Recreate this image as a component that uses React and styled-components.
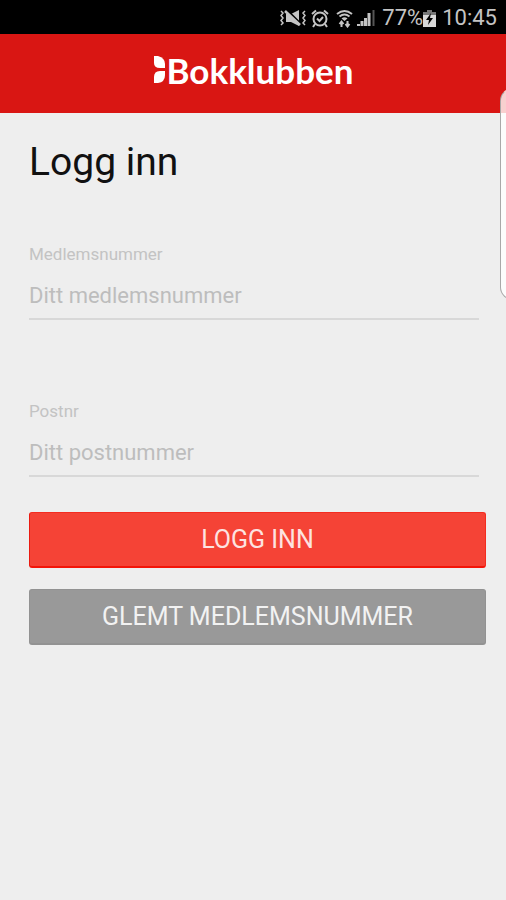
import React, { useState } from 'react'
import styled, { createGlobalStyle } from 'styled-components'

const GlobalStyle = createGlobalStyle`
  *, *::before, *::after {
    box-sizing: border-box;
  }

  body {
    margin: 0;
    background: #eeeeee;
    font-family: Roboto, 'Liberation Sans', sans-serif;
  }
`

const Screen = styled.div`
  position: relative;
  display: flex;
  flex-direction: column;
  min-height: 100vh;
  overflow: hidden;
`

const StatusBar = styled.div`
  display: flex;
  align-items: center;
  justify-content: flex-end;
  height: 34px;
  padding: 2px 9px 0 0;
  background: #000;
  color: #c4c4c4;
  font-size: 22px;
  line-height: 32px;
`

const StatusIcon = styled.svg`
  flex: none;
  fill: none;
  stroke: #c4c4c4;
  stroke-width: 2;
  margin-right: ${props => props.$gap || 0}px;
`

const Clock = styled.span`
  margin-left: 6px;
`

const Header = styled.header`
  display: flex;
  align-items: center;
  justify-content: center;
  height: 79px;
  padding-bottom: 8px;
  background: #d91613;
`

const Logo = styled.div`
  display: flex;
  align-items: center;
  gap: 1px;
  color: #fff;
  font-family: Lato, sans-serif;
  font-size: 35px;
  font-weight: 700;
  line-height: 40px;
`

const LogoMark = styled.svg`
  fill: #fff;
`

const Main = styled.main`
  padding: 25px 20px 24px 29px;
`

const Title = styled.h1`
  margin: 0 0 56px;
  color: #111;
  font-size: 39px;
  font-weight: 400;
  line-height: 48px;
`

const Field = styled.div`
  display: flex;
  flex-direction: column;
  margin: 0 7px ${props => (props.$last ? 35 : 79)}px 0;
`

const Label = styled.label`
  color: #c3c3c3;
  font-size: 17px;
  line-height: 24px;
`

const Input = styled.input`
  width: 100%;
  height: 54px;
  padding: 6px 0 0;
  border: 0;
  border-bottom: 2px solid #d8d8d8;
  border-radius: 0;
  outline: none;
  background: transparent;
  color: #333;
  font: 400 22px/28px Roboto, sans-serif;

  &::placeholder {
    color: #bdbdbd;
    opacity: 1;
  }

  &:focus {
    border-bottom-color: #f54336;
  }
`

const Button = styled.button`
  display: block;
  width: 100%;
  height: 56px;
  margin-bottom: 21px;
  padding: 0;
  border: 1px solid ${props => (props.$primary ? '#f42c20' : '#929292')};
  border-bottom: 2px solid ${props => (props.$primary ? '#f31509' : '#929292')};
  border-left-color: ${props => (props.$primary ? '#ea1a10' : '#929292')};
  border-radius: 3px;
  background: ${props => (props.$primary ? '#f54336' : '#999999')};
  color: ${props => (props.$primary ? '#fde3e1' : '#f2f2f2')};
  font: 400 25px/30px Roboto, sans-serif;
  text-transform: uppercase;
  cursor: pointer;
`

// Handle of the phone's edge panel, it floats over the app
const EdgeHandle = styled.div`
  position: absolute;
  top: 88px;
  right: -20px;
  width: 26px;
  height: 212px;
  border: 1px solid #a8a8a8;
  border-top-color: transparent;
  border-radius: 14px;
  background: rgba(255, 255, 255, 0.8);
`

const VibrateIcon = () => (
  <StatusIcon width="28" height="18" viewBox="0 0 28 18" $gap={4}>
    <path d="M2 2l2 2-2 2.500 2 2.500-2 2.500 2 2.500-2 2M26 2l-2 2 2 2.500-2 2.500 2 2.500-2 2.500 2 2" strokeWidth="1.5" />
    <path d="M7 5h5l8-4v16l-8-4H7z" fill="#c4c4c4" stroke="none" />
    <path d="M8 1l14 14" stroke="#000" strokeWidth="2" />
    <path d="M6 2l15 14" strokeWidth="2.5" />
  </StatusIcon>
)

const AlarmIcon = () => (
  <StatusIcon width="18" height="19" viewBox="0 0 18 19" $gap={7}>
    <circle cx="9" cy="10" r="6.5" />
    <path d="M1 5l4-3.5M17 5l-4-3.5M4 15l-2 3M14 15l2 3M6 9.5l2.5 2.5L12 8" />
  </StatusIcon>
)

const WifiIcon = () => (
  <StatusIcon width="17" height="19" viewBox="0 0 17 19" $gap={4}>
    <path d="M1 5q7.500-6 15 0M3.500 7.500q5-4 10 0" />
    <path d="M5.500 9.500q3-2.500 6 0l-3 2.500z" fill="#c4c4c4" stroke="none" />
    <path d="M5.500 18v-5M3.500 15l2-2.500 2 2.500M11.500 12v5M9.500 15l2 2.500 2-2.500" />
  </StatusIcon>
)

const SignalIcon = () => (
  <StatusIcon width="18" height="18" viewBox="0 0 18 18" $gap={7}>
    <path d="M0 17v-2h3v2zM3.500 17v-5h3v5zM7 17V9h3v8zM10.500 17V4h3v13z" fill="#c4c4c4" stroke="none" />
    <path d="M16.500 1v16" stroke="#555" />
  </StatusIcon>
)

const BatteryIcon = () => (
  <StatusIcon width="13" height="18" viewBox="0 0 13 18">
    <path d="M4 1h5v2h4v15H0V3h4z" fill="#777" stroke="none" />
    <path d="M0 6h13v12H0z" fill="#d8d8d8" stroke="none" />
    <path d="M8 4L3 11h3l-1 5 5-7H7z" fill="#000" stroke="none" />
  </StatusIcon>
)

const App = () => {
  const [member, setMember] = useState('')
  const [postcode, setPostcode] = useState('')

  return (
    <Screen>
      <GlobalStyle />
      <StatusBar>
        <VibrateIcon />
        <AlarmIcon />
        <WifiIcon />
        <SignalIcon />
        <span>77%</span>
        <BatteryIcon />
        <Clock>10:45</Clock>
      </StatusBar>
      <Header>
        <Logo>
          <LogoMark width="13" height="28" viewBox="0 0 13 28">
            <path d="M1 0h4q7 2 7 8v4H7Q1 12 1 7z" />
            <path d="M12 15v4q0 7-7 8H1v-6q0-6 6-6z" />
          </LogoMark>
          <span>Bokklubben</span>
        </Logo>
      </Header>
      <Main>
        <Title>Logg inn</Title>
        <form onSubmit={e => e.preventDefault()}>
          <Field>
            <Label htmlFor="member">Medlemsnummer</Label>
            <Input
              id="member"
              placeholder="Ditt medlemsnummer"
              value={member}
              onChange={e => setMember(e.target.value)}
            />
          </Field>
          <Field $last>
            <Label htmlFor="postcode">Postnr</Label>
            <Input
              id="postcode"
              placeholder="Ditt postnummer"
              value={postcode}
              onChange={e => setPostcode(e.target.value)}
            />
          </Field>
          <Button type="submit" $primary>Logg inn</Button>
          <Button type="button">Glemt medlemsnummer</Button>
        </form>
      </Main>
      <EdgeHandle />
    </Screen>
  )
}

export default App
